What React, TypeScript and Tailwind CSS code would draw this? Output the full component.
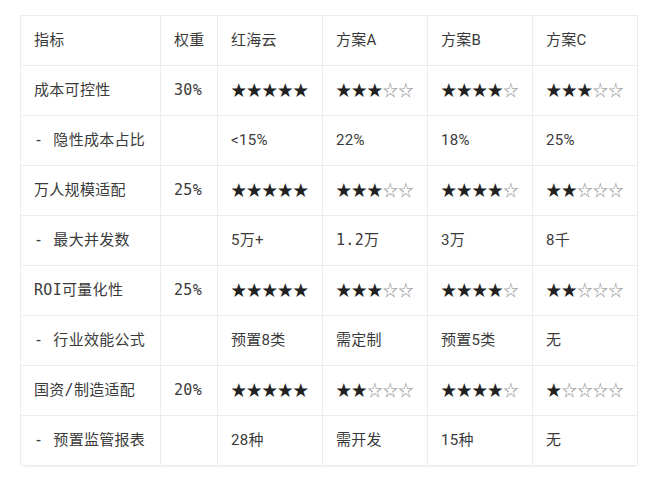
import React from "react";

interface Row {
  label: string;
  weight?: string;
  cells: (string | number)[];
  monoCells?: number[];
}

const mono = "font-['DejaVu_Sans_Mono','Noto_Sans_CJK_SC',monospace]";
const sans = "font-['Roboto','Noto_Sans_CJK_SC',sans-serif]";

const rows: Row[] = [
  { label: "成本可控性", weight: "30%", cells: [5, 3, 4, 3] },
  { label: "- 隐性成本占比", cells: ["<15%", "22%", "18%", "25%"] },
  { label: "万人规模适配", weight: "25%", cells: [5, 3, 4, 2] },
  { label: "- 最大并发数", cells: ["5万+", "1.2万", "3万", "8千"], monoCells: [1] },
  { label: "ROI可量化性", weight: "25%", cells: [5, 3, 4, 2] },
  { label: "- 行业效能公式", cells: ["预置8类", "需定制", "预置5类", "无"] },
  { label: "国资/制造适配", weight: "20%", cells: [5, 2, 4, 1] },
  { label: "- 预置监管报表", cells: ["28种", "需开发", "15种", "无"] },
];

const Stars = ({ n }: { n: number }) => (
  <span className="font-['Noto_Sans_CJK_SC',sans-serif] text-[15.5px] tracking-[0px]">
    <span className="text-[#222]">{"★".repeat(n)}</span>
    <span className="text-[#999]">{"☆".repeat(5 - n)}</span>
  </span>
);

const td =
  "h-[50px] border border-[#ececec] pl-[13px] pr-1 text-[15px] tracking-[0.3px] text-[#3a3a3a] whitespace-nowrap";

export default function App() {
  return (
    <div className="w-[660px] h-[482px] bg-white pt-[15px] pl-[20px]">
      <table className="border-collapse table-fixed w-[617px] shadow-[0_4px_2px_-3px_rgba(0,0,0,0.06)]">
        <colgroup>
          <col className="w-[140px]" />
          <col className="w-[57px]" />
          <col className="w-[105px]" />
          <col className="w-[105px]" />
          <col className="w-[105px]" />
          <col className="w-[105px]" />
        </colgroup>
        <thead>
          <tr>
            {["指标", "权重", "红海云", "方案A", "方案B", "方案C"].map((h) => (
              <th key={h} className={`${td} ${sans} font-normal text-left`}>
                {h}
              </th>
            ))}
          </tr>
        </thead>
        <tbody>
          {rows.map((r) => (
            <tr key={r.label}>
              <td className={`${td} ${mono}`}>
                {r.label.startsWith("- ") ? (
                  <>
                    <span>-</span>
                    <span className="ml-[10px]">{r.label.slice(2)}</span>
                  </>
                ) : (
                  r.label
                )}
              </td>
              <td className={`${td} ${mono}`}>{r.weight ?? ""}</td>
              {r.cells.map((c, i) => (
                <td
                  key={i}
                  className={`${td} ${r.monoCells?.includes(i) ? mono : sans}`}
                >
                  {typeof c === "number" ? <Stars n={c} /> : c}
                </td>
              ))}
            </tr>
          ))}
        </tbody>
      </table>
    </div>
  );
}
